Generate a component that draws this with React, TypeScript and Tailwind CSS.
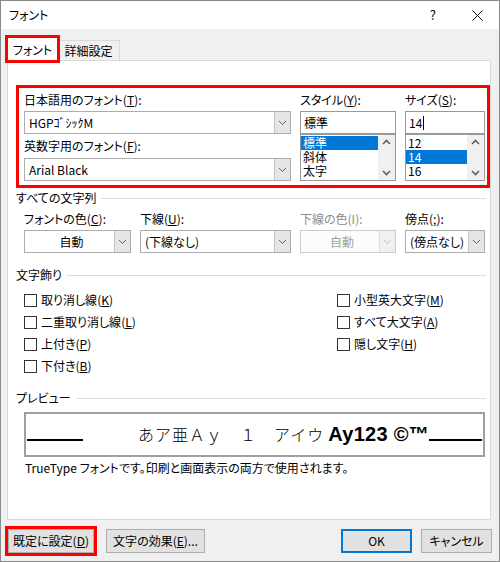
import React from "react";

const font = "font-['Noto_Sans_CJK_JP','Noto_Sans',sans-serif] [font-feature-settings:'palt']";

function Chevron({ up = false, color = "#606060", bold = false }: { up?: boolean; color?: string; bold?: boolean }) {
  return (
    <svg width="9" height="6" viewBox="0 0 9 6">
      <polyline
        points={up ? "1,5 4.5,1.5 8,5" : "1,1 4.5,4.5 8,1"}
        fill="none"
        stroke={color}
        strokeWidth={bold ? 1.6 : 1}
      />
    </svg>
  );
}

function Combo({ text, center = false, disabled = false }: { text: string; center?: boolean; disabled?: boolean }) {
  return (
    <div
      className={`h-[23px] flex border ${
        disabled ? "border-[#cccccc] bg-[#fcfcfc] text-[#a0a0a0]" : "border-[#adadad] bg-white"
      }`}
    >
      <div className={`flex-1 flex items-center pl-[4px] ${center ? "justify-center" : ""}`}>{text}</div>
      <div
        className={`w-[16px] flex items-center justify-center border-l ${
          disabled ? "bg-[#f0f0f0] border-[#dddddd]" : "bg-[#e5e5e5] border-[#c4c4c4]"
        }`}
      >
        <Chevron color={disabled ? "#c0c0c0" : "#606060"} />
      </div>
    </div>
  );
}

function ListBox({ items, selected }: { items: string[]; selected: number }) {
  return (
    <div className="h-[47px] border border-[#999999] bg-white flex">
      <div className="flex-1 pt-px">
        {items.map((it, i) => (
          <div
            key={it}
            className={`h-[14px] flex items-center pl-[2px] leading-[12px] ${
              i === selected ? "bg-[#0078d7] text-white" : ""
            }`}
          >
            {it}
          </div>
        ))}
      </div>
      <div className="w-[17px] bg-[#f0f0f0] flex flex-col items-center justify-between py-[4px]">
        <Chevron up bold />
        <Chevron bold />
      </div>
    </div>
  );
}

function Heading({ children }: { children: React.ReactNode }) {
  return (
    <div className="flex items-center h-[16px] ml-[8px] mr-[4px]">
      <span>{children}</span>
      <div className="flex-1 h-px bg-[#dcdcdc] ml-[5px]" />
    </div>
  );
}

function Check({ label, k }: { label: string; k: string }) {
  return (
    <div className="flex items-center h-[16px]">
      <div className="w-[13px] h-[13px] border border-[#333333] bg-white" />
      <span className="ml-[4px]">
        {label}(<u>{k}</u>)
      </span>
    </div>
  );
}

export default function App() {
  return (
    <div className={`w-[500px] h-[562px] bg-[#f0f0f0] border border-[#8a8a8a] flex flex-col text-[12px] text-black overflow-hidden ${font}`}>
      {/* title bar */}
      <div className="h-[28px] bg-white flex items-center pl-[8px] shrink-0">
        <span>フォント</span>
        <span className="ml-auto text-[13px] mr-[36px]">?</span>
        <svg width="11" height="11" viewBox="0 0 11 11" className="mr-[16px]">
          <path d="M0.5 0.5 L10.5 10.5 M10.5 0.5 L0.5 10.5" stroke="#111" strokeWidth="1" />
        </svg>
      </div>

      {/* tabs */}
      <div className="h-[31px] flex items-end pl-[6px] shrink-0">
        <div className="relative z-10 -mb-px h-[24px] w-[51px] bg-white border-l border-t border-r border-[#d9d9d9] flex items-center justify-center outline-[3px] outline-solid outline-[#ff0000] outline-offset-[-1px]">
          フォント
        </div>
        <div className="h-[20px] w-[62px] border-t border-r border-[#d9d9d9] flex items-center justify-center">
          詳細設定
        </div>
      </div>

      {/* panel */}
      <div className="ml-[6px] mr-[8px] h-[460px] bg-white border border-[#d9d9d9] shrink-0">
        <div className="ml-[11px] mt-[27px] w-[468px] h-[97px] outline-[3px] outline-solid outline-[#ff0000] pl-[5px] pt-[4px]">
          <div className="grid grid-cols-[267px_96px_80px] gap-x-[9px]">
            <div className="flex flex-col">
              <div className="h-[16px] leading-[16px]">
                日本語用のフォント(<u>T</u>):
              </div>
              <div className="mt-[3px]">
                <Combo text="HGPｺﾞｼｯｸM" />
              </div>
              <div className="mt-[4px] h-[16px] leading-[16px]">
                英数字用のフォント(<u>F</u>):
              </div>
              <div className="mt-[4px]">
                <Combo text="Arial Black" />
              </div>
            </div>
            <div className="flex flex-col">
              <div className="h-[16px] leading-[16px]">
                スタイル(<u>Y</u>):
              </div>
              <div className="mt-[3px] h-[23px] border border-[#999999] flex items-center pl-[3px]">標準</div>
              <ListBox items={["標準", "斜体", "太字"]} selected={0} />
            </div>
            <div className="flex flex-col">
              <div className="h-[16px] leading-[16px]">
                サイズ(<u>S</u>):
              </div>
              <div className="mt-[3px] h-[23px] border border-[#999999] flex items-center pl-[3px]">
                14<span className="w-px h-[14px] bg-black ml-px" />
              </div>
              <ListBox items={["12", "14", "16"]} selected={1} />
            </div>
          </div>
        </div>

        <div className="mt-[5px]">
          <Heading>すべての文字列</Heading>
        </div>
        <div className="ml-[16px] mt-[5px] grid grid-cols-[107px_151px_96px_80px] gap-x-[9px]">
          <div className="h-[16px] leading-[16px]">
            フォントの色(<u>C</u>):
          </div>
          <div className="h-[16px] leading-[16px]">
            下線(<u>U</u>):
          </div>
          <div className="h-[16px] leading-[16px] text-[#8c8c8c]">下線の色(I):</div>
          <div className="h-[16px] leading-[16px]">
            傍点(<u>;</u>):
          </div>
          <div className="mt-[3px]">
            <Combo text="自動" center />
          </div>
          <div className="mt-[3px]">
            <Combo text="(下線なし)" />
          </div>
          <div className="mt-[3px]">
            <Combo text="自動" center disabled />
          </div>
          <div className="mt-[3px]">
            <Combo text="(傍点なし)" />
          </div>
        </div>

        <div className="mt-[14px]">
          <Heading>文字飾り</Heading>
        </div>
        <div className="ml-[16px] mt-[9px] grid grid-cols-[313px_1fr] gap-y-[6px]">
          <Check label="取り消し線" k="K" />
          <Check label="小型英大文字" k="M" />
          <Check label="二重取り消し線" k="L" />
          <Check label="すべて大文字" k="A" />
          <Check label="上付き" k="P" />
          <Check label="隠し文字" k="H" />
          <Check label="下付き" k="B" />
        </div>

        <div className="mt-[16px]">
          <Heading>プレビュー</Heading>
        </div>
        <div className="mt-[6px] ml-[16px] w-[461px] h-[45px] border-2 border-[#a0a0a0] bg-white flex items-baseline pt-[10px] pl-px pr-px">
          <span className="w-[56px] h-[2px] bg-black" />
          <span className="ml-[55px] text-[16px] leading-none font-light [font-feature-settings:normal] tracking-[1px]">
            あア亜Ａｙ　１　アイウ
          </span>
          <span className="ml-[4px] text-[20px] leading-none font-bold font-['Liberation_Sans',sans-serif] tracking-[0.3px]">
            Ay123 ©™
          </span>
          <span className="flex-1 h-[2px] bg-black" />
        </div>
        <div className="mt-[3px] ml-[17px] h-[16px] leading-[16px]">
          TrueType フォントです。印刷と画面表示の両方で使用されます。
        </div>
      </div>

      {/* buttons */}
      <div className="mt-[9px] flex items-center pl-[7px] pr-[7px]">
        <button className="w-[86px] h-[24px] bg-[#e1e1e1] border border-[#adadad] outline-[3px] outline-solid outline-[#ff0000]">
          既定に設定(<u>D</u>)
        </button>
        <button className="ml-[12px] w-[99px] h-[24px] bg-[#e1e1e1] border border-[#adadad]">
          文字の効果(<u>E</u>)...
        </button>
        <button className="ml-auto w-[71px] h-[24px] bg-[#e1e1e1] border-2 border-[#0078d7]">OK</button>
        <button className="ml-[9px] w-[71px] h-[24px] bg-[#e1e1e1] border border-[#adadad]">キャンセル</button>
      </div>
    </div>
  );
}
